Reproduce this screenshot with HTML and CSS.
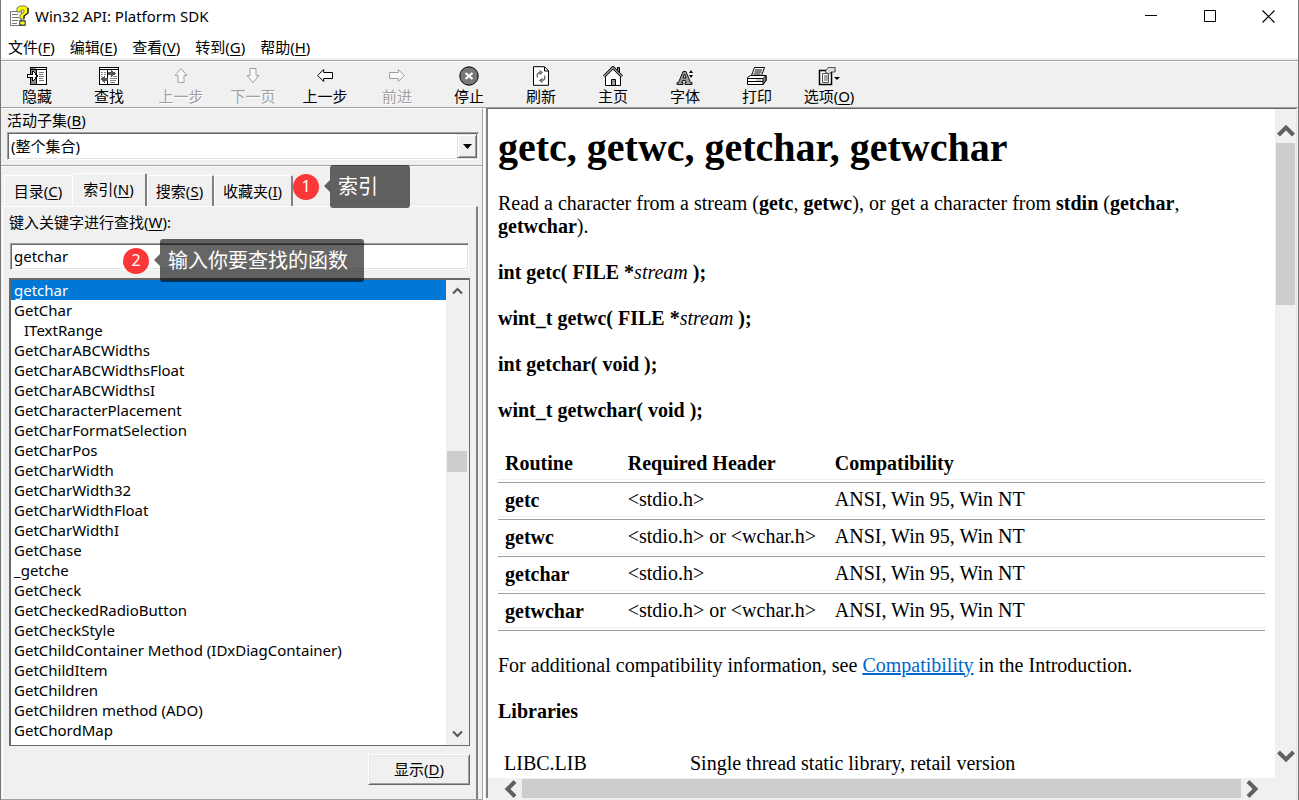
FILE: index.html
```html
<!DOCTYPE html>
<html lang="zh-CN">
<head>
<meta charset="utf-8">
<title>Win32 API: Platform SDK</title>
<link rel="stylesheet" href="styles.css">
</head>
<body>
<div class="window">
  <header class="titlebar">
    <svg class="app-icon" width="22" height="22" viewBox="0 0 22 22">
      <path d="M1.500 6.500h11v14h-11z" fill="#fff" stroke="#777"/>
      <path d="M3 9.500h6M3 12.500h7M3 15.500h6M3 18.500h5" stroke="#777"/>
      <path d="M8 6V3l3-2h5l3 2v5l-4 3v3h-4v-4l4-3V5h-3v2H8z" fill="#ff0" stroke="#555" stroke-width=".8"/>
      <path d="M19 3v5l-4 3v3M11 16v4h5v-4z" fill="none" stroke="#222" stroke-width="1.300"/>
      <path d="M11.500 16.500h4v3h-4z" fill="#ff0"/>
    </svg>
    <h1 class="window-title">Win32 API: Platform SDK</h1>
    <div class="window-controls">
      <button type="button" aria-label="Minimize"><svg width="12" height="12"><path d="M0 5.500h12" stroke="#000"/></svg></button>
      <button type="button" aria-label="Maximize"><svg width="12" height="12"><path d="M.5.5h11v11H.5z" fill="none" stroke="#000"/></svg></button>
      <button type="button" aria-label="Close"><svg width="13" height="13"><path d="M.5.5l12 12M12.500.5l-12 12" stroke="#000" stroke-width="1.200"/></svg></button>
    </div>
  </header>

  <nav class="menubar">
    <button type="button">文件(<u>F</u>)</button>
    <button type="button">编辑(<u>E</u>)</button>
    <button type="button">查看(<u>V</u>)</button>
    <button type="button">转到(<u>G</u>)</button>
    <button type="button">帮助(<u>H</u>)</button>
  </nav>

  <div class="toolbar" role="toolbar">
    <button type="button">
      <svg width="22" height="20" viewBox="0 0 22 20" shape-rendering="crispEdges"><path d="M4.500 1.500h16v17h-16z" fill="#fff" stroke="#000"/><path d="M5 2h5v16H5z" fill="#888"/><path d="M4 3.500h17M10.500 4v14" stroke="#000"/><path d="M13 6.500h5M13 8.500h4M13 10.500h5M13 12.500h4M13 14.500h5" stroke="#777"/><path d="M1.500 8.500h5v-3h1l4 4.500-4 4.500h-1v-3h-5z" fill="#fff" stroke="#000"/></svg>
      <span>隐藏</span></button>
    <button type="button">
      <svg width="22" height="20" viewBox="0 0 22 20" shape-rendering="crispEdges"><path d="M1.500 1.500h19v17h-19z" fill="#fff" stroke="#000"/><path d="M1 3.500h20M9.500 4v14" stroke="#000"/><path d="M3 6.500h2M6 6.500h2M3 8.500h2M6 8.500h2M3 10.500h1M15 10.500h4M12 12.500h7M12 14.500h6M12 16.500h5" stroke="#888"/><path d="M10 6h3V4l5 3.500-5 3.500V9h-3zM10 12H7v-2l-5 3 5 4v-2h3z" fill="#555"/></svg>
      <span>查找</span></button>
    <button type="button" disabled>
      <svg width="16" height="20" viewBox="0 0 16 20"><path d="M8 2.500l6 7h-3v7H5v-7H2z"/></svg>
      <span>上一步</span></button>
    <button type="button" disabled>
      <svg width="16" height="20" viewBox="0 0 16 20"><path d="M8 16.500l6-7h-3v-7H5v7H2z"/></svg>
      <span>下一页</span></button>
    <button type="button">
      <svg width="16" height="20" viewBox="0 0 16 20"><path d="M.7 9.500l6-6v3h8.800v6H6.700v3z" fill="#fff" stroke="#000"/></svg>
      <span>上一步</span></button>
    <button type="button" disabled>
      <svg width="16" height="20" viewBox="0 0 16 20"><path d="M15.300 9.500l-6-6v3H.5v6h8.800v3z"/></svg>
      <span>前进</span></button>
    <button type="button">
      <svg width="20" height="20" viewBox="0 0 20 20"><circle cx="10" cy="10" r="9.200" fill="#777" stroke="#000"/><path d="M6.500 7l7 6M13.500 7l-7 6" stroke="#fff" stroke-width="2.200"/></svg>
      <span>停止</span></button>
    <button type="button">
      <svg width="18" height="20" viewBox="0 0 18 20"><path d="M1.500.7h11l4 4v14.600h-15z" fill="#fff" stroke="#000"/><path d="M12.500 1v4h4" fill="none" stroke="#000"/><path d="M8.500 6.500c-3 0-4 2-3 5M7.500 4.500l2.500 2-2.500 2M9.500 14.500c3 0 4-2 3-5M10.500 12.500l-2.500 2 2.500 2" fill="none" stroke="#666" stroke-width="1.300"/></svg>
      <span>刷新</span></button>
    <button type="button">
      <svg width="20" height="20" viewBox="0 0 20 20"><path d="M14.500 1.500h2v7h-2z" fill="#888" stroke="#000"/><path d="M2.500 10v9.500h15V10L10 2z" fill="#fff" stroke="#000"/><path d="M1 10.500L10 1.500l9 9" fill="none" stroke="#000" stroke-width="3"/><path d="M1 10.500L10 1.500l9 9" fill="none" stroke="#aaa" stroke-width="1.200"/><path d="M8.500 13.500h4v6h-4z" fill="#999" stroke="#000"/></svg>
      <span>主页</span></button>
    <button type="button">
      <svg width="18" height="20" viewBox="0 0 18 20"><path d="M1 16.500h1.500L7 5.500h3l4.500 11H16v2H9v-2h1l-.7-2H6.500l-.8 2H7v2H1zM7 12h3L8.500 8z" fill="#999" stroke="#000" stroke-width=".9"/><path d="M13 7l2-3 2 3zM13 9h4l-2 3z"/></svg>
      <span>字体</span></button>
    <button type="button">
      <svg width="22" height="20" viewBox="0 0 22 20"><path d="M5.500 9.500l3-8h10l-3 8z" fill="#fff" stroke="#000"/><path d="M9 4h7M8.500 6h7M7.500 8h7" stroke="#000"/><path d="M1.500 11.500l3-2h15.500v5l-3 4h-15.500z" fill="#fff" stroke="#000"/><path d="M17 12.500l3-3v5l-3 4z" fill="#888" stroke="#000"/><path d="M1.500 12.500H17M2 15.500h15" stroke="#000"/><path d="M10 14h5" stroke="#999"/></svg>
      <span>打印</span></button>
    <button type="button">
      <svg width="22" height="20" viewBox="0 0 22 20"><path d="M1.500 4.500h12v14h-12z" fill="#fff" stroke="#000" stroke-width="1.500"/><path d="M4.500 7.500h6v9h-6z" fill="none" stroke="#555"/><path d="M6 10h4M6 12h4M6 14h4" stroke="#555"/><path d="M7 6l3-4.500h7v4.500h-4l-2 2z" fill="#ddd" stroke="#333" stroke-width=".8"/><path d="M17 1h1v5h-1z" fill="#888"/><path d="M16 11h6l-3 3z"/></svg>
      <span>选项(<u>O</u>)</span></button>
  </div>

  <div class="panes">
    <aside class="sidebar">
      <div class="subset">
        <label for="subset">活动子集(<u>B</u>)</label>
        <div class="combo">
          <select id="subset"><option>(整个集合)</option></select>
          <span class="combo-arrow" aria-hidden="true"><svg width="9" height="5"><path d="M0 0h9L4.500 5z"/></svg></span>
        </div>
      </div>

      <div class="tabs" role="tablist">
        <button type="button" role="tab" class="tab tab-contents">目录(<u>C</u>)</button>
        <button type="button" role="tab" class="tab tab-index active" aria-selected="true">索引(<u>N</u>)</button>
        <button type="button" role="tab" class="tab tab-search">搜索(<u>S</u>)</button>
        <button type="button" role="tab" class="tab tab-favorites">收藏夹(<u>I</u>)</button>
        <div class="note note-tab"><span class="badge">1</span><span class="bubble">索引</span></div>
      </div>

      <section class="index-panel">
        <label class="keyword-label" for="keyword">键入关键字进行查找(<u>W</u>):</label>
        <div class="keyword">
          <input id="keyword" type="text" value="getchar">
          <div class="note note-keyword"><span class="badge">2</span><span class="bubble">输入你要查找的函数</span></div>
        </div>
        <div class="listbox">
          <ul role="listbox" aria-label="索引">
            <li role="option" class="selected" aria-selected="true">getchar</li>
            <li role="option">GetChar</li>
            <li role="option" class="sub">ITextRange</li>
            <li role="option">GetCharABCWidths</li>
            <li role="option">GetCharABCWidthsFloat</li>
            <li role="option">GetCharABCWidthsI</li>
            <li role="option">GetCharacterPlacement</li>
            <li role="option">GetCharFormatSelection</li>
            <li role="option">GetCharPos</li>
            <li role="option">GetCharWidth</li>
            <li role="option">GetCharWidth32</li>
            <li role="option">GetCharWidthFloat</li>
            <li role="option">GetCharWidthI</li>
            <li role="option">GetChase</li>
            <li role="option">_getche</li>
            <li role="option">GetCheck</li>
            <li role="option">GetCheckedRadioButton</li>
            <li role="option">GetCheckStyle</li>
            <li role="option">GetChildContainer Method (IDxDiagContainer)</li>
            <li role="option">GetChildItem</li>
            <li role="option">GetChildren</li>
            <li role="option">GetChildren method (ADO)</li>
            <li role="option">GetChordMap</li>
          </ul>
          <div class="list-scroll">
            <button type="button" aria-label="Scroll up"><svg width="11" height="8"><path d="M1 6.500l4.500-4.500L10 6.500" fill="none" stroke="#555" stroke-width="2"/></svg></button>
            <div class="list-track"><div class="thumb"></div></div>
            <button type="button" aria-label="Scroll down"><svg width="11" height="8"><path d="M1 1.500L5.500 6 10 1.500" fill="none" stroke="#555" stroke-width="2"/></svg></button>
          </div>
        </div>
        <div class="actions"><button type="button" class="show">显示(<u>D</u>)</button></div>
      </section>
    </aside>

    <main class="viewer">
      <article class="topic">
        <h2>getc, getwc, getchar, getwchar</h2>
        <p>Read a character from a stream (<b>getc</b>, <b>getwc</b>), or get a character from <b>stdin</b> (<b>getchar</b>, <b>getwchar</b>).</p>
        <p><b>int getc( FILE *</b><i>stream</i> <b>);</b></p>
        <p><b>wint_t getwc( FILE *</b><i>stream</i> <b>);</b></p>
        <p><b>int getchar( void );</b></p>
        <p><b>wint_t getwchar( void );</b></p>
        <table class="routines">
          <thead><tr><th>Routine</th><th>Required Header</th><th>Compatibility</th></tr></thead>
          <tbody>
            <tr><th>getc</th><td>&lt;stdio.h&gt;</td><td>ANSI, Win 95, Win NT</td></tr>
            <tr><th>getwc</th><td>&lt;stdio.h&gt; or &lt;wchar.h&gt;</td><td>ANSI, Win 95, Win NT</td></tr>
            <tr><th>getchar</th><td>&lt;stdio.h&gt;</td><td>ANSI, Win 95, Win NT</td></tr>
            <tr><th>getwchar</th><td>&lt;stdio.h&gt; or &lt;wchar.h&gt;</td><td>ANSI, Win 95, Win NT</td></tr>
          </tbody>
        </table>
        <p>For additional compatibility information, see <a href="#compatibility">Compatibility</a> in the Introduction.</p>
        <h3>Libraries</h3>
        <table class="libraries">
          <tbody><tr><td>LIBC.LIB</td><td>Single thread static library, retail version</td></tr></tbody>
        </table>
      </article>
      <div class="vscroll">
        <button type="button" aria-label="Scroll up"><svg width="18" height="14"><path d="M1.500 12L9 4.500l7.500 7.500" fill="none" stroke="#606060" stroke-width="4"/></svg></button>
        <div class="vtrack"><div class="thumb"></div></div>
        <button type="button" aria-label="Scroll down"><svg width="18" height="14"><path d="M1.500 2L9 9.500 16.500 2" fill="none" stroke="#606060" stroke-width="4"/></svg></button>
      </div>
      <div class="hscroll">
        <button type="button" aria-label="Scroll left"><svg width="14" height="18"><path d="M12 1.500L4.500 9l7.500 7.500" fill="none" stroke="#606060" stroke-width="4"/></svg></button>
        <div class="thumb"></div>
        <button type="button" aria-label="Scroll right"><svg width="14" height="18"><path d="M2 1.500L9.500 9 2 16.500" fill="none" stroke="#606060" stroke-width="4"/></svg></button>
      </div>
    </main>
  </div>
</div>
</body>
</html>
```
FILE: styles.css
```css
* { box-sizing: border-box; }

body {
  margin: 0;
  background: #fff;
  color: #000;
  font: 15px/20px "Noto Sans", "Noto Sans CJK SC", sans-serif;
}

button {
  margin: 0;
  padding: 0;
  border: 0;
  background: none;
  color: inherit;
  font: inherit;
}

u { text-underline-offset: 2px; }
svg { display: block; flex: none; }

.window {
  display: flex;
  flex-direction: column;
  height: 100vh;
  border-left: 1px solid #777;
  border-right: 1px solid #777;
  overflow: hidden;
}

/* Title bar and menu */
.titlebar {
  flex: none;
  display: flex;
  align-items: center;
  height: 32px;
  padding-left: 8px;
}
.window-title {
  flex: 1;
  margin: 0 0 0 4px;
  font-size: 15px;
  font-weight: 400;
}
.window-controls { display: flex; }
.window-controls button {
  display: grid;
  place-items: center;
  width: 59px;
  height: 32px;
}
.menubar {
  flex: none;
  display: flex;
  gap: 15px;
  height: 28px;
  padding: 5px 7px 2px;
  border-bottom: 2px solid #f0f0f0;
}
.menubar button { line-height: 20px; }

/* Toolbar */
.toolbar {
  flex: none;
  display: flex;
  height: 48px;
  border-top: 1px solid #a0a0a0;
  border-bottom: 1px solid #a0a0a0;
  box-shadow: inset 0 1px #fff;
  background: #f0f0f0;
}
.toolbar button {
  display: flex;
  flex-direction: column;
  align-items: center;
  width: 72px;
  padding-top: 5px;
  white-space: nowrap;
}
.toolbar button:disabled {
  color: #a0a0a0;
  text-shadow: 1px 1px #fff;
}
.toolbar button:disabled path {
  fill: #f8f8f8;
  stroke: #a0a0a0;
}

.panes {
  flex: 1;
  display: grid;
  grid-template-columns: 482px minmax(0, 1fr);
  gap: 3px;
  min-height: 0;
  background: #f0f0f0;
}

/* Navigation pane */
.sidebar {
  display: flex;
  flex-direction: column;
  min-height: 0;
  border-top: 1px solid #fff;
  border-right: 1px solid #a0a0a0;
  border-bottom: 1px solid #a0a0a0;
  box-shadow: 2px 0 #fff;
}
.subset {
  flex: none;
  height: 57px;
  padding: 1px 3px 0 6px;
  border-bottom: 1px solid #a0a0a0;
  box-shadow: 0 1px #fff;
}
.subset label {
  display: block;
  height: 22px;
}
.combo {
  display: flex;
  height: 28px;
  border: 1px solid #a0a0a0;
  border-right-color: #fff;
  border-bottom-color: #fff;
  background: #fff;
  box-shadow: inset 1px 1px #696969, inset -1px -1px #e3e3e3;
}
.combo select {
  flex: 1;
  min-width: 0;
  padding: 0 3px;
  border: 0;
  background: none;
  color: inherit;
  font: inherit;
  appearance: none;
}
.combo-arrow {
  display: grid;
  place-items: center;
  width: 20px;
  margin: 1px;
  border: 1px solid #e3e3e3;
  border-right-color: #696969;
  border-bottom-color: #696969;
  background: #f0f0f0;
  box-shadow: inset 1px 1px #fff, inset -1px -1px #a0a0a0;
}

.tabs {
  position: relative;
  flex: none;
  display: flex;
  align-items: flex-end;
  height: 40px;
  padding-left: 3px;
}
.tab {
  height: 31px;
  padding-right: 1px;
  border-top: 1px solid #fff;
  border-left: 1px solid #fff;
  border-right: 2px solid #808080;
  border-radius: 2px 2px 0 0;
  white-space: nowrap;
}
.tab-contents { width: 68px; border-right: 0; }
.tab-index { width: 75px; }
.tab-search { width: 67px; }
.tab-favorites { width: 79px; }
.tab.active {
  height: 33px;
  padding-bottom: 3px;
}

.index-panel {
  flex: 1;
  display: flex;
  flex-direction: column;
  min-height: 0;
  margin: 0 4px 0 1px;
  padding: 5px 6px 14px;
  border-top: 1px solid #fff;
  border-left: 1px solid #fff;
  border-right: 2px solid #808080;
}
.keyword-label { height: 31px; }
.keyword {
  position: relative;
  height: 27px;
}
.keyword input {
  width: calc(100% - 2px);
  height: 27px;
  margin-left: 1px;
  padding: 0 3px 2px;
  border: 1px solid #a0a0a0;
  border-right-color: #fff;
  border-bottom-color: #fff;
  box-shadow: inset 1px 1px #696969, inset -1px -1px #e3e3e3;
  background: #fff;
  color: inherit;
  font: inherit;
}
.listbox {
  flex: 1;
  display: flex;
  min-height: 0;
  margin: 8px 0;
  border: 2px solid #696969;
  border-right-width: 1px;
  border-bottom-width: 1px;
  background: #fff;
}
.listbox ul {
  flex: 1;
  margin: 0;
  padding: 0;
  overflow: hidden;
  list-style: none;
}
.listbox li {
  height: 20px;
  padding-left: 3px;
  white-space: nowrap;
}
.listbox .sub { padding-left: 13px; }
.listbox .selected {
  background: #0078d7;
  color: #fff;
}
.list-scroll {
  display: flex;
  flex-direction: column;
  width: 23px;
  padding: 0 2px 0 1px;
  background: #f0f0f0;
}
.list-scroll button, .vscroll button, .hscroll button {
  flex: none;
  display: grid;
  place-items: center;
}
.list-scroll button { height: 22px; }
.list-track {
  flex: 1;
  padding-top: 149px;
}
.list-track .thumb { height: 21px; }
.thumb { background: #cdcdcd; }

.actions {
  display: flex;
  justify-content: flex-end;
}
.show {
  width: 102px;
  height: 31px;
  padding-bottom: 2px;
  border: 1px solid #fff;
  border-right-color: #696969;
  border-bottom-color: #696969;
  background: #f0f0f0;
  box-shadow: inset 1px 1px #e3e3e3, inset -1px -1px #a0a0a0;
}

/* Numbered callouts laid over the pane */
.note {
  position: absolute;
  z-index: 1;
  display: flex;
  align-items: center;
  gap: 11px;
  white-space: nowrap;
}
.note-tab { left: 292px; top: -1px; }
.note-keyword { left: 114px; top: -4px; }
.badge {
  width: 26px;
  height: 26px;
  border-radius: 50%;
  background: #fc3737;
  color: #fff;
  font-size: 16px;
  line-height: 25px;
  text-align: center;
}
.bubble {
  position: relative;
  min-width: 80px;
  height: 43px;
  padding: 0 16px 0 8px;
  border-radius: 3px;
  background: rgba(0, 0, 0, .6);
  color: #fff;
  font-size: 20px;
  line-height: 44px;
}
.bubble::before {
  content: "";
  position: absolute;
  left: -6px;
  top: 15px;
  border: 6px solid transparent;
  border-left-width: 0;
  border-right-color: rgba(0, 0, 0, .6);
}

/* Topic pane */
.viewer {
  display: grid;
  grid-template: minmax(0, 1fr) 20px / minmax(0, 1fr) 21px;
  min-height: 0;
  margin: 0 1px 2px 0;
  border-top: 1px solid #696969;
  border-left: 2px solid #808080;
  border-right: 1px solid #e3e3e3;
}
.topic {
  padding: 16px 10px 0;
  overflow: hidden;
  background: #fff;
  font: 20px/23px "Liberation Serif", serif;
}
.topic h2 {
  margin: 0 0 22px;
  font-size: 40px;
  line-height: 45px;
}
.topic p, .topic h3 { margin: 0 0 23px; }
.topic h3 { font-size: 20px; }
.topic a { color: #0066cc; }
.topic table { border-collapse: collapse; }
.topic th, .topic td {
  text-align: left;
  vertical-align: top;
}
.routines {
  width: 100%;
  margin-bottom: 23px;
}
.routines th, .routines td {
  height: 37px;
  padding: 5px 7px;
  border-bottom: 1px solid #a0a0a0;
  background: linear-gradient(#f0f0f0, #f0f0f0) 0 calc(100% - 2px) / 100% 1px no-repeat;
}
.routines thead th { padding-top: 7px; }
.routines th:nth-child(1) { width: 16%; }
.routines th:nth-child(2) { width: 27%; }
.routines tbody th { padding-top: 6px; }
.libraries { width: 100%; }
.libraries td { padding: 6px; }
.libraries td:first-child { width: 186px; }

.vscroll {
  grid-row: 1 / 3;
  grid-column: 2;
  display: flex;
  flex-direction: column;
  padding: 12px 1px 30px;
  background: #f0f0f0;
}
.vscroll button { height: 22px; }
.vscroll button:first-child { padding-bottom: 4px; }
.vtrack { flex: 1; }
.vtrack .thumb { height: 162px; }
.hscroll {
  display: flex;
  padding: 1px 10px 0;
  background: #f0f0f0;
}
.hscroll button { width: 24px; }
.hscroll .thumb { flex: 1; }
```
